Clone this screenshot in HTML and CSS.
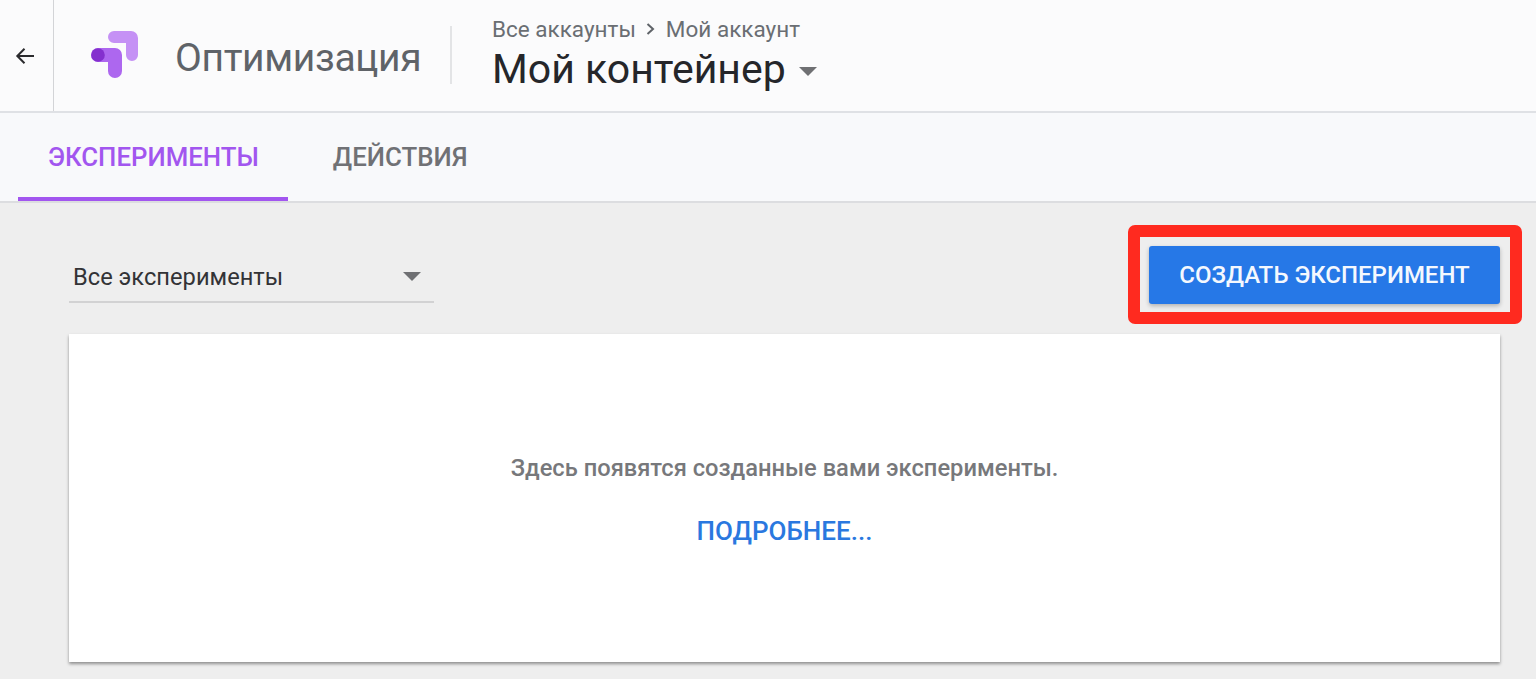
FILE: index.html
```html
<!DOCTYPE html>
<html lang="ru">
<head>
  <meta charset="UTF-8">
  <title>Оптимизация</title>
  <link rel="stylesheet" href="styles.css">
</head>
<body>

  <!-- Header -->
  <header class="top-bar">
    <div class="back-box">
      <svg width="24" height="24" viewBox="0 0 24 24"><path d="M21 12H4.500M11.500 4.800L4.300 12l7.200 7.200" fill="none" stroke="#2b2b2e" stroke-width="2"/></svg>
    </div>
    <div class="logo-box">
      <svg width="52" height="52" viewBox="0 0 52 52">
        <path d="M26 3h17a7 7 0 0 1 7 7v17a6 6 0 0 1-12 0V15H26a6 6 0 0 1 0-12z" fill="#c591f5"/>
        <path d="M10 20h17a7 7 0 0 1 7 7v16a7 7 0 0 1-14 0V34H10a7 7 0 0 1 0-14z" fill="#ad67ef"/>
        <circle cx="10" cy="27" r="6.800" fill="#8430ce"/>
      </svg>
      <span class="product-name">Оптимизация</span>
    </div>
    <div class="container-box">
      <div class="crumbs">
        <span>Все аккаунты</span>
        <svg width="14" height="14" viewBox="0 0 14 14"><path d="M3.500 2l5.500 5-5.500 5" fill="none" stroke="#5f6368" stroke-width="2"/></svg>
        <span>Мой аккаунт</span>
      </div>
      <div class="container-name">Мой контейнер <span class="arrow"></span></div>
    </div>
  </header>

  <!-- Tabs -->
  <nav class="tabs">
    <a class="tab active">ЭКСПЕРИМЕНТЫ</a>
    <a class="tab">ДЕЙСТВИЯ</a>
  </nav>

  <!-- Main -->
  <main class="content">
    <div class="toolbar">
      <div class="filter">
        <span>Все эксперименты</span>
        <span class="arrow small"></span>
      </div>
      <div class="create-wrap">
        <button class="create-btn">СОЗДАТЬ ЭКСПЕРИМЕНТ</button>
      </div>
    </div>
    <section class="card">
      <p>Здесь появятся созданные вами эксперименты.</p>
      <a class="more">ПОДРОБНЕЕ...</a>
    </section>
  </main>

</body>
</html>
```

FILE: styles.css
```css
/* General Reset */
* {
  margin: 0;
  padding: 0;
  box-sizing: border-box;
}

html, body {
  height: 679px;
  overflow: hidden;
}

body {
  font-family: Roboto, "Noto Sans", sans-serif;
  background-color: #eeeeee;
  color: #212124;
}

/* Header */
.top-bar {
  display: flex;
  height: 113px;
  background-color: #fbfbfc;
  border-bottom: 2px solid #dfe1e5;
}

.back-box {
  width: 54px;
  display: flex;
  align-items: center;
  justify-content: center;
  padding-right: 3px;
  border-right: 1px solid #d3d4d7;
}

.logo-box {
  width: 398px;
  height: 58px;
  margin-top: 26px;
  display: flex;
  align-items: center;
  padding-left: 34px;
  border-right: 2px solid #e3e4e6;
}

.logo-box svg {
  margin-top: -2px;
}

.product-name {
  margin-left: 35px;
  margin-top: 5px;
  font-size: 39px;
  color: #5f6368;
  letter-spacing: -0.35px;
}

.container-box {
  padding-left: 40px;
  padding-top: 16px;
}

.crumbs {
  display: flex;
  align-items: center;
  gap: 8px;
  font-size: 22.5px;
  line-height: 26px;
  color: #6a6e73;
}

.container-name {
  margin-top: 2px;
  font-size: 41px;
  line-height: 50px;
  color: #25262a;
  display: flex;
  align-items: center;
  white-space: pre;
}

.arrow {
  display: inline-block;
  width: 0;
  height: 0;
  margin-left: 3px;
  margin-top: 4px;
  border-left: 9px solid transparent;
  border-right: 9px solid transparent;
  border-top: 9px solid #6f7073;
}

/* Tabs */
.tabs {
  display: flex;
  height: 90px;
  padding-left: 18px;
  background-color: #f8f9fb;
  border-bottom: 2px solid #dcdde0;
}

.tab {
  display: flex;
  align-items: center;
  height: 88px;
  padding: 4px 29px 0 30px;
  font-size: 25.8px;
  font-weight: 500;
  color: #707175;
  border-bottom: 4px solid transparent;
}

.tab.active {
  color: #a256ef;
  border-bottom-color: #a256ef;
  margin-right: 15px;
}

/* Main */
.content {
  padding: 0 36px 0 69px;
}

.toolbar {
  display: flex;
  justify-content: space-between;
  align-items: flex-start;
  padding-top: 43px;
  height: 131px;
}

.filter {
  width: 365px;
  height: 57px;
  padding: 17px 13px 0 4px;
  display: flex;
  justify-content: space-between;
  font-size: 23.7px;
  color: #333336;
  border-bottom: 2px solid #d2d2d3;
}

.filter .small {
  margin-top: 9px;
}

.create-wrap {
  position: relative;
}

/* Red annotation frame over the button */
.create-wrap::after {
  content: "";
  position: absolute;
  top: -21px;
  right: -22px;
  bottom: -20px;
  left: -21px;
  border: 12px solid #ff2a1f;
  border-radius: 7px;
}

.create-btn {
  display: block;
  width: 351px;
  height: 58px;
  border: none;
  border-radius: 3px;
  background-color: #2678e7;
  color: #f4f8fe;
  font-family: inherit;
  font-size: 24px;
  font-weight: 500;
  box-shadow: 0 2px 4px rgba(0, 0, 0, 0.25);
}

.card {
  height: 328px;
  background-color: #ffffff;
  box-shadow: 0 2px 3px rgba(0, 0, 0, 0.4);
  text-align: center;
  padding-top: 121px;
}

.card p {
  font-size: 23.7px;
  font-weight: 500;
  line-height: 26px;
  color: #77787b;
}

.more {
  display: block;
  margin-top: 36px;
  font-size: 26px;
  font-weight: 500;
  line-height: 28px;
  color: #2a78df;
}
```
